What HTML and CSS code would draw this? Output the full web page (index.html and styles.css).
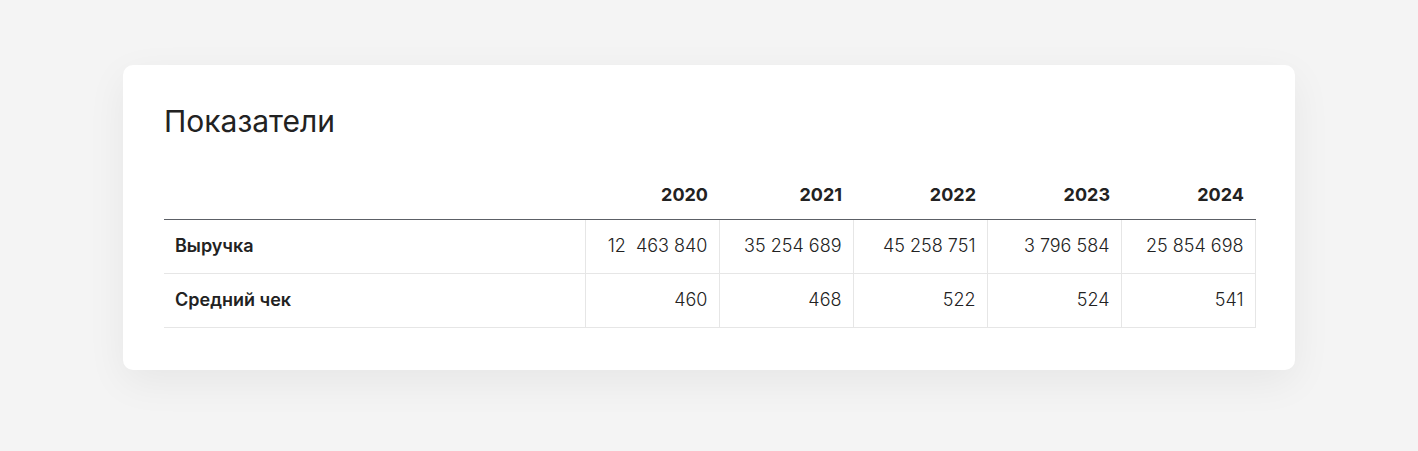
FILE: index.html
```html
<!DOCTYPE html>
<html lang="ru">
<head>
<meta charset="utf-8">
<title>Показатели</title>
<link rel="stylesheet" href="styles.css">
</head>
<body>
<div class="page">
  <section class="card">
    <h1 class="title">Показатели</h1>
    <table class="metrics">
      <colgroup>
        <col class="col-name">
        <col class="col-year"><col class="col-year"><col class="col-year"><col class="col-year"><col class="col-year">
      </colgroup>
      <thead>
        <tr>
          <th class="name"></th>
          <th>2020</th><th>2021</th><th>2022</th><th>2023</th><th>2024</th>
        </tr>
      </thead>
      <tbody>
        <tr>
          <td class="name">Выручка</td>
          <td>12&nbsp; 463 840</td>
          <td>35 254 689</td>
          <td>45 258 751</td>
          <td>3 796 584</td>
          <td>25 854 698</td>
        </tr>
        <tr>
          <td class="name">Средний чек</td>
          <td>460</td><td>468</td><td>522</td><td>524</td><td>541</td>
        </tr>
      </tbody>
    </table>
  </section>
</div>
</body>
</html>
```
FILE: styles.css
```css
* { box-sizing: border-box; }
html, body { margin: 0; padding: 0; }
body {
  background: #f4f4f4;
  font-family: Inter, "Noto Sans", sans-serif;
  color: #222222;
}
.page {
  padding: 65px 123px 81px;
}
.card {
  background: #ffffff;
  border-radius: 10px;
  box-shadow: 0 12px 40px rgba(0, 0, 0, 0.06);
  padding: 38px 41px 42px;
}
.title {
  margin: 0;
  font-size: 30px;
  line-height: 36px;
  font-weight: 400;
  color: #222;
}
.metrics {
  margin-top: 36px;
  width: 1091px;
  border-collapse: collapse;
  table-layout: fixed;
}
.col-name { width: 421px; }
.col-year { width: 134px; }
.metrics th {
  font-size: 18px;
  font-weight: 700;
  text-align: right;
  padding: 0 11px 13px;
  height: 44px;
  vertical-align: bottom;
  border-bottom: 1px solid #5c6066;
  line-height: 22px;
  white-space: nowrap;
}
.metrics td {
  font-size: 18px;
  font-weight: 300;
  text-align: right;
  padding: 0 11px;
  height: 54px;
  border-bottom: 1px solid #e6e6e6;
  border-left: 1px solid #e6e6e6;
  line-height: 22px;
  white-space: nowrap;
}
.metrics td:last-child { border-right: 1px solid #e6e6e6; }
.metrics td.name {
  text-align: left;
  font-weight: 600;
  border-left: none;
}
```
